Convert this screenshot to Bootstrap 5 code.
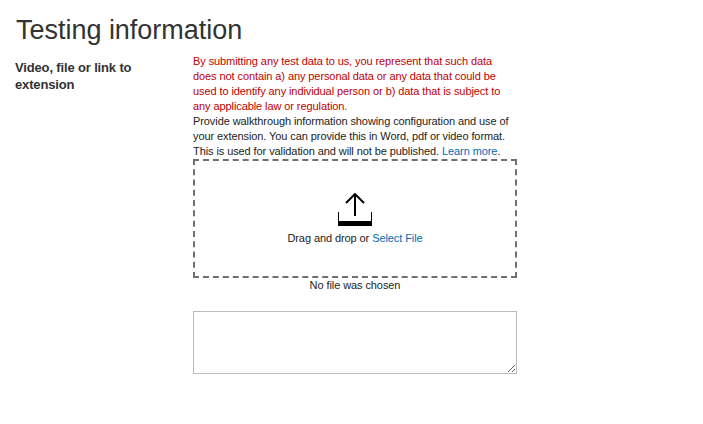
<!DOCTYPE html>
<html lang="en">
<head>
<meta charset="utf-8">
<title>Testing information</title>
<link href="https://cdn.jsdelivr.net/npm/bootstrap@5.3.0/dist/css/bootstrap.min.css" rel="stylesheet">
<style>
body{font:11px/15px "Liberation Sans",Arial,sans-serif;letter-spacing:-.087px;color:#222;width:703px;height:424px;overflow:hidden}
h1{font-size:27px;line-height:32px;letter-spacing:-.02px;color:#333;font-weight:400;margin:0;padding:14px 0 0 16px}
.form-line{padding:8px 0 0 15px}
.field-name{width:178px;font:700 13px/17px "Liberation Sans",Arial,sans-serif;letter-spacing:-.15px;color:#333;padding:5px 40px 0 0}
.field-body{width:324px}
.notice{color:#c00000}
a{color:#006ab8;text-decoration:none}
.drop-area{height:119px;border:2px dashed #707070;padding-top:32px}
.drop-hint{margin-top:5px}
.link-box{height:63px;border:1px solid #bbb;border-radius:0;margin-top:18px;resize:both;display:block}
</style>
</head>
<body class="bg-white">
<main>
<h1>Testing information</h1>
<div class="form-line d-flex">
<label class="field-name flex-shrink-0" for="link">Video, file or link to<br>extension</label>
<div class="field-body flex-shrink-0">
<div class="text-nowrap"><span class="notice">By submitting any test data to us, you represent that such data<br>does not contain a) any personal data or any data that could be<br>used to identify any individual person or b) data that is subject to<br>any applicable law or regulation.</span><br>Provide walkthrough information showing configuration and use of<br>your extension. You can provide this in Word, pdf or video format.<br>This is used for validation and will not be published. <a href="#">Learn more</a>.</div>
<div class="drop-area d-flex flex-column align-items-center">
<svg width="34" height="33" viewBox="0 0 34 33"><path d="M17 23V1M8 10L17 1l9 9" fill="none" stroke="#000" stroke-width="2"/><path d="M0 19h1v9h32v-9h1v14H0z"/></svg>
<div class="drop-hint">Drag and drop or <a href="#">Select File</a></div>
</div>
<div class="text-center">No file was chosen</div>
<textarea id="link" class="link-box w-100"></textarea>
</div>
</div>
</main>
<script src="https://cdn.jsdelivr.net/npm/bootstrap@5.3.0/dist/js/bootstrap.bundle.min.js"></script>
</body>
</html>
